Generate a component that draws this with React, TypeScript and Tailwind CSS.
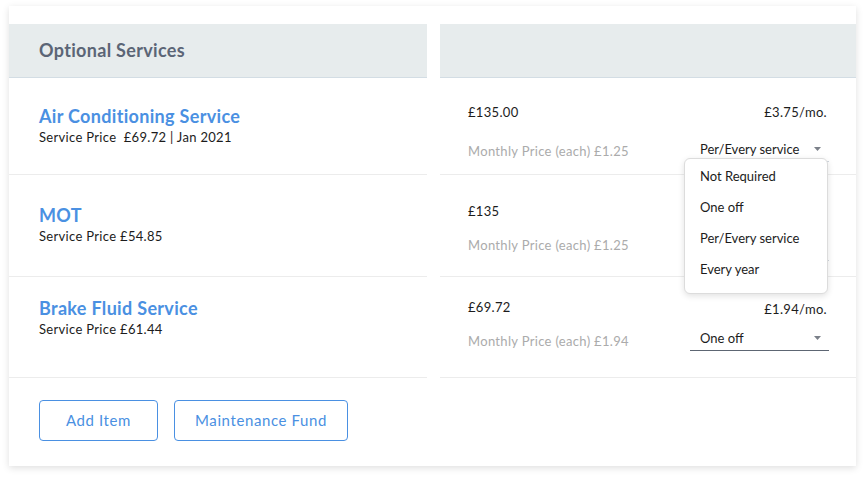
const rows = [
  {
    title: "Air Conditioning Service",
    sub: "Service Price  £69.72 | Jan 2021",
    price: "£135.00",
    monthly: "Monthly Price (each) £1.25",
    perMonth: "£3.75/mo.",
    option: "Per/Every service",
    h: "h-[97px]",
    leftPt: "pt-[26px]",
    aPt: "pt-[25px]",
    aGap: "mt-[21px]",
    bPt: "pt-[25px]",
    bGap: "mt-[16px]",
    open: true,
    line: "border-[#cfd6de]",
  },
  {
    title: "MOT",
    sub: "Service Price £54.85",
    price: "£135",
    monthly: "Monthly Price (each) £1.25",
    perMonth: "",
    option: "",
    h: "h-[102px]",
    leftPt: "pt-[28px]",
    aPt: "pt-[27px]",
    aGap: "mt-[16px]",
    bPt: "pt-[27px]",
    bGap: "mt-[16px]",
    open: false,
    line: "border-[#cfd6de]",
  },
  {
    title: "Brake Fluid Service",
    sub: "Service Price £61.44",
    price: "£69.72",
    monthly: "Monthly Price (each) £1.94",
    perMonth: "£1.94/mo.",
    option: "One off",
    h: "h-[101px]",
    leftPt: "pt-[19px]",
    aPt: "pt-[21px]",
    aGap: "mt-[16px]",
    bPt: "pt-[23px]",
    bGap: "mt-[8px]",
    open: false,
    line: "border-[#5d6673]",
  },
];

const options = ["Not Required", "One off", "Per/Every service", "Every year"];

const Caret = () => (
  <svg width="7" height="4" viewBox="0 0 7 4" className="mr-[8px]">
    <path d="M0 0h7L3.5 4z" fill="#7b8089" />
  </svg>
);

export default function App() {
  return (
    <div className="min-h-[479px] bg-white font-['Lato',sans-serif] tracking-[0.02em] text-[#1c1c1c]">
      <div className="ml-[9px] mt-[6px] w-[847px] h-[460px] bg-white pt-[18px] shadow-[0_2px_7px_rgba(0,0,0,0.13)]">
        <div className="grid grid-cols-[418px_416px] gap-x-[13px]">
          <div className="h-[54px] bg-[#e7eced] border-b border-[#d3dde4] pl-[30px] flex items-center">
            <h2 className="text-[18px] font-bold text-[#5b6576]">Optional Services</h2>
          </div>
          <div className="h-[54px] bg-[#e7eced] border-b border-[#d3dde4]" />

          {rows.map((r) => (
            <div key={r.title} className="contents">
              <div className={`${r.h} ${r.leftPt} border-b border-[#ececec] pl-[30px]`}>
                <div className="text-[18px] leading-[24px] font-bold text-[#4a90e2]">{r.title}</div>
                <div className="text-[13px] leading-[18px] whitespace-pre">{r.sub}</div>
              </div>
              <div className={`${r.h} border-b border-[#ececec] pl-[28px] pr-[27px] flex justify-between`}>
                <div className={r.aPt}>
                  <div className="text-[13px] leading-[18px]">{r.price}</div>
                  <div className={`${r.aGap} text-[13px] leading-[18px] text-[#ababab]`}>{r.monthly}</div>
                </div>
                <div className={`${r.bPt} flex flex-col items-end`}>
                  <div className="h-[18px] text-[13px] leading-[18px] mr-[2px]">{r.perMonth}</div>
                  <div className={`${r.bGap} relative`}>
                    <div className={`w-[139px] h-[25px] border-b ${r.line} pl-[10px] flex items-center justify-between`}>
                      <span className="text-[13px] leading-[18px] tracking-normal">{r.option}</span>
                      {r.option && <Caret />}
                    </div>
                    {r.open && (
                      <ul className="absolute z-10 left-[-6px] top-[21px] w-[144px] h-[136px] bg-white border border-[#dcdcdc] rounded-[6px] shadow-[0_2px_6px_rgba(0,0,0,0.12)] pt-[2px] tracking-normal">
                        {options.map((o) => (
                          <li key={o} className="h-[31px] pl-[15px] flex items-center text-[13px]">
                            {o}
                          </li>
                        ))}
                      </ul>
                    )}
                  </div>
                </div>
              </div>
            </div>
          ))}
        </div>

        <div className="flex gap-[16px] pl-[30px] pt-[22px]">
          <button className="w-[119px] h-[41px] rounded-[4px] border border-[#4a90e2] text-[15px] tracking-[0.04em] text-[#4a90e2]">
            Add Item
          </button>
          <button className="w-[174px] h-[41px] rounded-[4px] border border-[#4a90e2] text-[15px] tracking-[0.04em] text-[#4a90e2]">
            Maintenance Fund
          </button>
        </div>
      </div>
    </div>
  );
}
